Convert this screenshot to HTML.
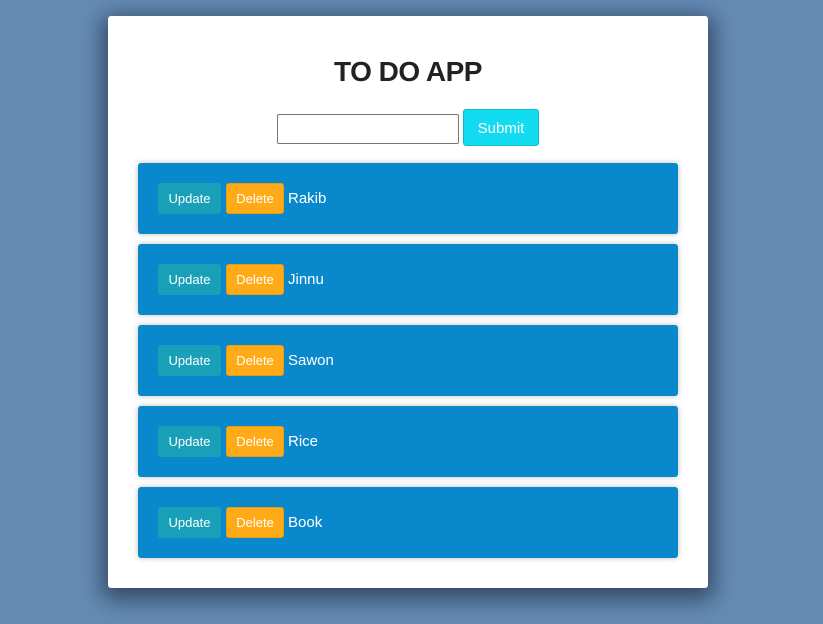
<!DOCTYPE html>
<html><head><style>
*{box-sizing:border-box;margin:0;padding:0}
body{width:823px;height:624px;background:#658bb5;font-family:"Liberation Sans",sans-serif;position:relative;overflow:hidden}
.card{position:absolute;left:108px;top:16px;width:600px;height:572px;background:#fff;border-radius:3px;box-shadow:0 6px 22px 6px rgba(20,30,50,.6)}
h1{position:absolute;top:40px;left:0;width:600px;text-align:center;font-size:28px;font-weight:bold;color:#222;letter-spacing:-0.5px}
.inp{position:absolute;left:169px;top:98px;width:182px;height:30px;border:1px solid #767676;border-radius:2px}
.sub{position:absolute;left:355px;top:93px;width:76px;height:37px;background:#12dcf2;border:1px solid #0fb8cc;border-radius:3px;color:#fff;font-size:15px;text-align:center;line-height:37px}
.row{position:absolute;left:30px;width:540px;height:71px;background:#0989cc;border-radius:3px;box-shadow:0 0 6px rgba(0,0,0,.25)}
.b{position:absolute;top:20px;height:31px;border-radius:3px;color:#fff;font-size:13px;text-align:center;line-height:31px}
.u{left:20px;width:63px;background:#17a0b7}
.d{left:88px;width:58px;background:#ffaa17;border:1px solid #e89a10;line-height:29px}
.t{position:absolute;left:150px;top:27px;color:#fff;font-size:15px}
</style></head><body>
<div class="card">
<h1>TO DO APP</h1>
<div class="inp"></div>
<div class="sub">Submit</div>
<div class="row" style="top:147px"><div class="b u">Update</div><div class="b d">Delete</div><div class="t">Rakib</div></div>
<div class="row" style="top:228px"><div class="b u">Update</div><div class="b d">Delete</div><div class="t">Jinnu</div></div>
<div class="row" style="top:309px"><div class="b u">Update</div><div class="b d">Delete</div><div class="t">Sawon</div></div>
<div class="row" style="top:390px"><div class="b u">Update</div><div class="b d">Delete</div><div class="t">Rice</div></div>
<div class="row" style="top:471px"><div class="b u">Update</div><div class="b d">Delete</div><div class="t">Book</div></div>
</div>
</body></html>
